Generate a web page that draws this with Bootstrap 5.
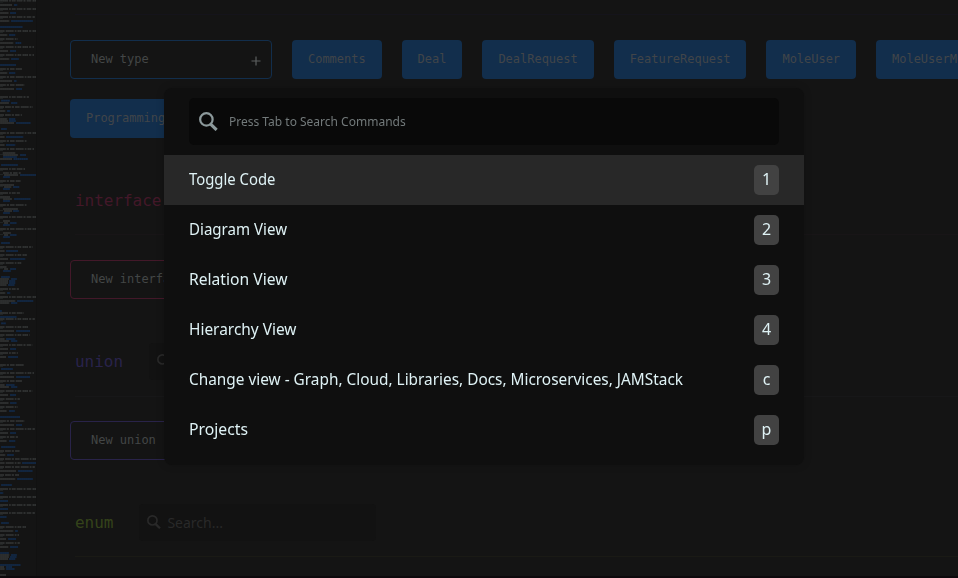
<!DOCTYPE html>
<html lang="en" data-bs-theme="dark">
<head>
<meta charset="utf-8">
<meta name="viewport" content="width=device-width, initial-scale=1">
<title>Commands</title>
<link href="https://cdn.jsdelivr.net/npm/bootstrap@5.3.0/dist/css/bootstrap.min.css" rel="stylesheet">
<style>
body{background:#141414;font-family:"Noto Sans",sans-serif;height:578px;overflow:hidden}
.app{height:578px;overflow:hidden}
.minimap{width:50px;background:#131313}
.minimap svg{display:block;background:#141414;border-right:1px solid #111}
.board{min-width:0;padding-left:20px}
.code{font-family:"DejaVu Sans Mono",monospace;font-size:12px;letter-spacing:-.024px;line-height:18px}
.rule{height:1px;margin-left:5px}
.rule-type{margin-top:14px;background:#15141b}
.rule-interface{margin-top:15px;background:#181517}
.rule-union{margin-top:16px;background:#171718}
.rule-enum{margin-top:15px;background:#1a1a15}
.chips{width:1100px;gap:20px;padding-top:25px}
.chip{height:39px;padding:0 16px 1px;background:#122e4c;color:#414549;border-radius:4px}
.fresh{width:202px;height:39px;padding:0 10px 1px 20px;border:1px solid #122e4c;border-radius:4px;color:#434646}
.fresh.pink{border-color:#431829;margin-top:25px}
.fresh.violet{border-color:#292349;margin-top:24px}
.kind{font-family:"DejaVu Sans Mono",monospace;font-size:16px;letter-spacing:-.03px;line-height:24px;padding-left:5px}
.kindrow{height:37px;margin-top:44px}
.finder{width:237px;height:37px;margin-left:26px;gap:6px;background:#121212;border-radius:4px;padding:0 0 1px 8px;color:#292929;font-size:14px}
.palette{position:fixed;left:164px;top:88px;width:640px;height:377px;background:#0f0f0f;border-radius:8px;box-shadow:0 0 8px rgba(0,0,0,.16);padding:10px 0}
.query{height:47px;margin:0 25px 10px;background:#090909;border-radius:5px;padding-left:10px;color:#737a7b;font-size:12px}
.query svg{color:#8c999b;margin-right:11px}
.cmd{height:50px;padding:0 25px;color:#dff2f5;font-size:16px;line-height:24px}
.cmd.on{background:#282828}
.cmd-label{white-space:nowrap;transform-origin:left;padding-bottom:2px}
.hotkey{width:25px;height:30px;border-radius:5px;background:#424242;font-size:16px;padding-bottom:3px}
.bottom-edge{position:fixed;left:0;right:0;bottom:0;height:2px;background:#0d090c}
</style>
<script src="https://cdn.jsdelivr.net/npm/bootstrap@5.3.0/dist/js/bootstrap.bundle.min.js"></script>
</head>
<body>
<svg class="d-none"><symbol id="lens" viewBox="0 0 18 18"><circle cx="7" cy="7" r="5.9" fill="none" stroke="currentColor" stroke-width="2.1"/><path d="M10.8 11.3 16.7 17" fill="none" stroke="currentColor" stroke-width="3"/></symbol></svg>
<div class="app d-flex">
  <aside class="minimap flex-shrink-0"><svg id="map" width="37" height="578" viewBox="0 0 108 1734" preserveAspectRatio="none"></svg></aside>
  <main class="board flex-grow-1 overflow-hidden">
    <div class="rule rule-type"></div>
    <div class="chips d-flex flex-wrap code">
      <div class="fresh d-flex align-items-center justify-content-between"><span>New type</span><svg class="mt-1" width="10" height="10" viewBox="0 0 10 10"><path d="M5 .5v9M.5 5h9" stroke="#5c5f5f" stroke-width="1.2"/></svg></div>
      <div class="chip d-flex align-items-center">Comments</div>
      <div class="chip d-flex align-items-center">Deal</div>
      <div class="chip d-flex align-items-center">DealRequest</div>
      <div class="chip d-flex align-items-center">FeatureRequest</div>
      <div class="chip d-flex align-items-center">MoleUser</div>
      <div class="chip d-flex align-items-center">MoleUserMutation</div>
      <div class="chip d-flex align-items-center">ProgrammingLanguage</div>
    </div>
    <div class="kindrow d-flex align-items-center"><span class="kind" style="color:#431829">interface</span></div>
    <div class="rule rule-interface"></div>
    <div class="fresh pink code d-flex align-items-center">New interface</div>
    <div class="kindrow d-flex align-items-center"><span class="kind" style="color:#29234b">union</span>
      <div class="finder d-flex align-items-center"><svg width="14" height="14"><use href="#lens"/></svg></div></div>
    <div class="rule rule-union"></div>
    <div class="fresh violet code d-flex align-items-center">New union</div>
    <div class="kindrow d-flex align-items-center"><span class="kind" style="color:#34431a">enum</span>
      <div class="finder d-flex align-items-center"><svg width="14" height="14"><use href="#lens"/></svg><span>Search...</span></div></div>
    <div class="rule rule-enum"></div>
  </main>
</div>
<div class="bottom-edge"></div>
<section class="palette">
  <div class="query d-flex align-items-center"><svg width="19" height="19" viewBox="0 0 18 18"><use href="#lens"/></svg><span>Press Tab to Search Commands</span></div>
  <div class="cmd on d-flex align-items-center justify-content-between"><span class="cmd-label" data-w="86.5">Toggle Code</span><span class="hotkey d-flex align-items-center justify-content-center">1</span></div>
  <div class="cmd d-flex align-items-center justify-content-between"><span class="cmd-label" data-w="98">Diagram View</span><span class="hotkey d-flex align-items-center justify-content-center">2</span></div>
  <div class="cmd d-flex align-items-center justify-content-between"><span class="cmd-label" data-w="98.5">Relation View</span><span class="hotkey d-flex align-items-center justify-content-center">3</span></div>
  <div class="cmd d-flex align-items-center justify-content-between"><span class="cmd-label" data-w="107.5">Hierarchy View</span><span class="hotkey d-flex align-items-center justify-content-center">4</span></div>
  <div class="cmd d-flex align-items-center justify-content-between"><span class="cmd-label" data-w="494">Change view - Graph, Cloud, Libraries, Docs, Microservices, JAMStack</span><span class="hotkey d-flex align-items-center justify-content-center">c</span></div>
  <div class="cmd d-flex align-items-center justify-content-between"><span class="cmd-label" data-w="59">Projects</span><span class="hotkey d-flex align-items-center justify-content-center">p</span></div>
</section>
<script>
document.querySelectorAll('.cmd-label').forEach(function(e){
  e.style.transform='scaleX('+(e.dataset.w/e.getBoundingClientRect().width)+')';
});
// Overview of the schema source: y, grey start-end, blue start-end.
var rows=`2 0-108|15 0-36 42-52|27 0-108|39 0-26 30-48|51 0-105|63 0-28 33-98|81 - 0-68|93 0-108|105 0-22 27-46|117 0-54|129 0-40 46-64|141 0-102|153 0-24 30-48|165 0-102|177 0-28 33-56|195 - 0-48|207 0-66|219 0-22 27-46|231 0-108|243 0-36 42-50|255 0-75|267 0-42 48-66|291 0-87|302 - 3-30|309 0-27 33-52|321 0-99|333 0-16 21-31|345 0-66|357 0-22 27-46|363 0-24 27-48|369 0-42 48-92|387 - 3-20|399 0-108|411 0-14 18-70|423 0-80|435 0-14 18-46|447 0-102|459 8-46|465 9-54 60-78|471 - 9-50|477 0-36 40-84|495 - 3-54|507 0-75|519 9-62|525 12-54 60-108|531 - 9-30|543 0-62|555 0-42|561 12-34 39-58|567 - 9-30|579 0-60|591 0-30|597 9-36 42-92
603 - 9-30|615 0-81|627 9-54|633 12-36 39-56|639 - 9-30|651 0-108|663 9-30|669 12-24 30-50|675 - 9-30|687 0-108|699 9-32|705 12-24 30-50|711 - 9-30|729 - 3-30|741 0-99|753 0-14 18-54|765 0-81|777 0-24 30-76|789 0-66|801 0-20|807 12-24 30-48|813 - 9-32|831 - 3-30|837 0-27 33-50|843 0-24 27-46|849 0-24 27-46|855 0-20 24-44|867 0-57|879 0-16 21-31|891 0-108|903 0-46 51-100|909 0-28 33-52|933 - 0-5|939 0-72|951 - 0-50|957 0-105|970 - 3-18|981 0-87|993 0-42 48-90|1005 0-89|1017 0-14 18-46|1023 0-27 33-52|1035 0-98|1047 0-24 30-48|1059 0-54|1071 0-18 24-54|1095 0-72|1107 - 3-38|1119 0-102|1131 0-42 48-90|1143 0-66|1155 0-14 18-44|1161 0-27 33-52|1173 0-98|1185 0-24 30-48|1197 0-60
1209 0-26 30-50|1221 0-54|1233 0-20 27-44|1251 - 0-60|1263 0-75|1275 0-42 48-66|1287 0-105|1299 0-24 30-48|1311 0-54|1323 0-20 27-46|1341 - 3-46|1353 0-60|1365 0-16 21-42|1377 0-108|1389 0-62 66-108|1401 0-105|1413 0-48 54-98|1425 0-57|1437 0-46 51-98|1455 - 3-36|1467 0-108|1479 - 0-10|1491 0-108|1503 - 0-24|1515 0-108|1527 - 0-24|1539 0-105|1551 - 0-20|1569 - 3-26|1581 0-78|1593 0-40 45-54|1605 0-57|1617 0-18 24-48|1629 0-60|1641 0-25 30-54|1659 - 0-27|1665 0-28 33-50|1671 0-27 30-50|1677 0-24 27-46|1695 - 0-62|1701 0-12 18-36|1707 0-14 18-44|1725 0-18|1731 - 0-9`.split(/[|\n]/);
var out='';
function bars(y,range,grey){
  if(!range||range==='-')return;
  var p=range.split('-').map(Number),x=p[0],i=0,full=p[1]-p[0];
  while(x<p[1]){
    var w=grey&&full>52?[24,5,12,17,7,14][(i+(y>>2))%6]:full;
    w=Math.min(w,p[1]-x);
    out+='<rect x="'+x+'" y="'+(y-3)+'" width="'+w+'" height="6" fill="'+(grey?'#292b2b':'#12233a')+'"/>';
    for(var k=x+2;k<x+w-2;k+=6)out+='<rect x="'+k+'" y="'+(y-2)+'" width="3" height="4" fill="'+(grey?'#323434':'#142c49')+'"/>';
    x+=w+3;i++;
  }
}
rows.forEach(function(r){
  var a=r.split(' ');
  bars(+a[0],a[1],true);bars(+a[0],a[2],false);
  if(a[1]!=='-'&&!a[2])out+='<rect x="0" y="'+(+a[0]+3)+'" width="9" height="3" fill="#202323"/>';
});
document.getElementById('map').innerHTML=out;
</script>
</body>
</html>
